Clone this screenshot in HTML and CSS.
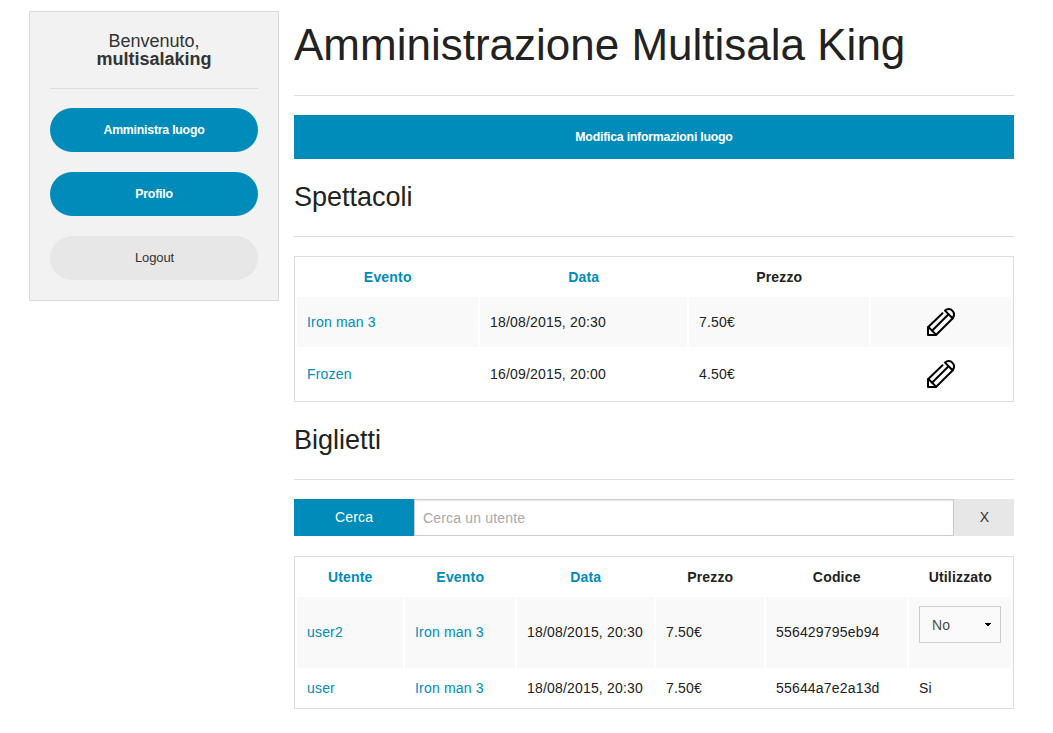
FILE: index.html
```html
<!DOCTYPE html>
<html lang="it">
<head>
<meta charset="utf-8">
<title>Amministrazione Multisala King</title>
<link rel="stylesheet" href="styles.css">
</head>
<body>
<svg width="0" height="0" class="defs">
  <symbol id="pencil" viewBox="0 0 28 28">
    <g fill="none" stroke="#000" stroke-width="2" stroke-linejoin="round" stroke-linecap="round">
      <path d="M15.5 5.2 1 19.2V27H9L25.8 10.2"/>
      <path d="M1.4 19 9 26.6M5 22.8 20.8 7"/>
      <path d="M18 2.6C20.5.4 23.6.8 25.3 2.6C27.2 4.6 27.8 7.4 25.6 10.2Z"/>
    </g>
  </symbol>
</svg>
<div class="page">
  <aside class="panel">
    <p class="welcome">Benvenuto,<br><strong>multisalaking</strong></p>
    <hr>
    <nav class="menu">
      <a class="button round" href="#">Amministra luogo</a>
      <a class="button round" href="#">Profilo</a>
      <a class="button round secondary" href="#">Logout</a>
    </nav>
  </aside>
  <main class="content">
    <h1>Amministrazione Multisala King</h1>
    <hr>
    <a class="button" href="#">Modifica informazioni luogo</a>
    <h2>Spettacoli</h2>
    <hr>
    <table class="shows">
      <colgroup><col class="s1"><col class="s2"><col class="s3"><col class="s4"></colgroup>
      <thead><tr><th><a href="#">Evento</a></th><th><a href="#">Data</a></th><th>Prezzo</th><th></th></tr></thead>
      <tbody>
        <tr><td><a href="#">Iron man 3</a></td><td>18/08/2015, 20:30</td><td>7.50€</td><td class="edit"><svg width="28" height="28"><use href="#pencil"/></svg></td></tr>
        <tr><td><a href="#">Frozen</a></td><td>16/09/2015, 20:00</td><td>4.50€</td><td class="edit"><svg width="28" height="28"><use href="#pencil"/></svg></td></tr>
      </tbody>
    </table>
    <h2>Biglietti</h2>
    <hr>
    <form class="search">
      <button type="button" class="go">Cerca</button>
      <input type="text" placeholder="Cerca un utente">
      <button type="button" class="clear">X</button>
    </form>
    <table class="tickets">
      <colgroup><col class="t1"><col class="t2"><col class="t3"><col class="t4"><col class="t5"><col class="t6"></colgroup>
      <thead><tr><th><a href="#">Utente</a></th><th><a href="#">Evento</a></th><th><a href="#">Data</a></th><th>Prezzo</th><th>Codice</th><th>Utilizzato</th></tr></thead>
      <tbody>
        <tr class="tall"><td><a href="#">user2</a></td><td><a href="#">Iron man 3</a></td><td>18/08/2015, 20:30</td><td>7.50€</td><td>556429795eb94</td>
          <td class="used"><div class="select"><span>No</span><svg width="6" height="3" viewBox="0 0 6 3"><path d="M0 0H6V1H5V2H4V3H2V2H1V1H0Z"/></svg></div></td></tr>
        <tr><td><a href="#">user</a></td><td><a href="#">Iron man 3</a></td><td>18/08/2015, 20:30</td><td>7.50€</td><td>55644a7e2a13d</td><td>Si</td></tr>
      </tbody>
    </table>
  </main>
</div>
</body>
</html>
```
FILE: styles.css
```css
* { box-sizing: border-box; }
body {
  margin: 0;
  background: #fff;
  color: #222;
  font-family: "Liberation Sans", Arial, sans-serif;
}
a { color: #008cba; text-decoration: none; }
.defs { display: block; }
.page {
  display: flex;
  align-items: flex-start;
  gap: 15px;
  padding: 11px 0 0 29px;
}
hr { width: 100%; height: 1px; margin: 0; border: 0; background: #ddd; }
.panel {
  width: 250px;
  padding: 20px;
  border: 1px solid #d8d8d8;
  background: #f2f2f2;
}
.welcome {
  margin: 0 0 20px;
  color: #333;
  font-size: 18px;
  line-height: 18px;
  text-align: center;
}
.menu { display: flex; flex-direction: column; gap: 20px; margin-top: 19px; }
.button {
  display: block;
  height: 44px;
  background: #008cba;
  color: #fff;
  font-size: 12.3px;
  font-weight: bold;
  line-height: 44px;
  letter-spacing: -0.22px;
  text-align: center;
}
.round { border-radius: 22px; }
.secondary {
  padding-left: 1px;
  background: #e7e7e7;
  color: #333;
  font-size: 13px;
  font-weight: normal;
  line-height: 43px;
  letter-spacing: -0.1px;
}

.content { width: 720px; padding-top: 3px; }
h1, h2 { margin: 0; font-weight: normal; }
h1 { margin-bottom: 19px; font-size: 44px; line-height: 62px; white-space: nowrap; }
h2 { margin: 19px 0 20px; font-size: 27px; line-height: 38px; }
.content > .button { margin-top: 19px; }

table {
  width: 720px;
  margin-top: 19px;
  border: 1px solid #ddd;
  border-collapse: separate;
  border-spacing: 2px;
  table-layout: fixed;
  font-size: 14px;
  line-height: 18px;
  letter-spacing: 0.18px;
}
th, td { height: 36px; padding: 0 10px; white-space: nowrap; }
th { padding-left: 10.5px; }
td { text-align: left; vertical-align: middle; }
tbody tr:first-child td { background: #f9f9f9; }
.shows td { height: 50px; }
.s1 { width: 181px; } .s2 { width: 207px; } .s3 { width: 180px; } .s4 { width: 140px; }
.t1 { width: 106px; } .t2 { width: 110px; } .t3 { width: 137px; }
.t4 { width: 108px; } .t5 { width: 141px; } .t6 { width: 102px; }
.edit { text-align: center; }
.edit svg { display: block; margin: 0 auto; }
.tickets { margin-top: 20px; }
.tickets .tall td { height: 71px; padding-bottom: 1px; }
.tickets .tall .used { padding-top: 9px; vertical-align: top; }
.select {
  display: flex;
  align-items: center;
  justify-content: space-between;
  width: 82px;
  height: 37px;
  padding: 0 9px 0 12px;
  border: 1px solid #ccc;
  background: #fafafa;
  color: #4d4d4d;
}

.search { display: flex; height: 37px; margin-top: 19px; }
.search button, .search input { margin: 0; font: 14px "Liberation Sans", Arial, sans-serif; letter-spacing: 0.18px; }
.search button { border: 0; padding: 0 0 1px; }
.search .go { width: 120px; background: #008cba; color: #fff; }
.search .clear { width: 60px; padding-left: 1px; background: #e7e7e7; color: #333; }
.search input {
  flex: 1;
  min-width: 0;
  padding: 0 8px;
  border: 1px solid #ccc;
  border-radius: 0;
  box-shadow: inset 0 1px 2px rgba(0, 0, 0, 0.1);
}
.search input::placeholder { color: #a9a9a9; }
```
